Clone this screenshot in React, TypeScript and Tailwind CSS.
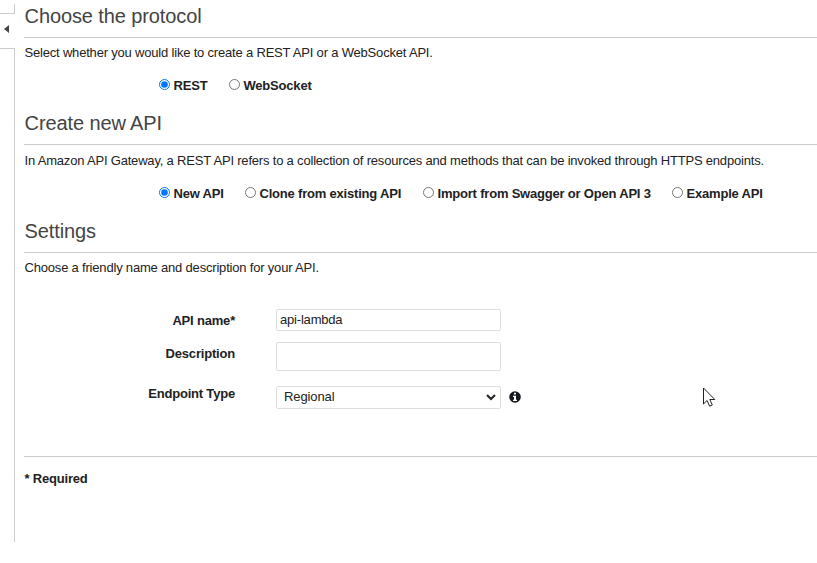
import React from "react";

function Heading({ children }: { children: React.ReactNode }) {
  return (
    <h2 className="h-[38px] border-b border-[#ccc] pl-[0.6px] pt-[4px] text-[20px] leading-[24px] tracking-[-0.11px] text-[#444] whitespace-nowrap">
      {children}
    </h2>
  );
}

function Radio({ name, label, checked, className }: { name: string; label: string; checked?: boolean; className: string }) {
  return (
    <label className={"flex shrink-0 items-start whitespace-nowrap font-bold tracking-[-0.2px] " + className}>
      <input type="radio" name={name} defaultChecked={checked} className="mr-[3.5px] mt-[2px] h-[11px] w-[11px] shrink-0" />
      <span className="leading-[18px]">{label}</span>
    </label>
  );
}

export default function App() {
  return (
    <div className="flex h-[563px] w-[817px] overflow-hidden bg-white font-['Liberation_Sans',Arial,sans-serif] text-[13px] tracking-[-0.19px] text-[#222]">
      <div className="flex w-[15px] shrink-0 flex-col pt-[4px]">
        <div className="h-[10px] border-b border-r border-[#ccc]" />
        <div className="flex h-[34px] items-center pb-[4px] pl-[4px]">
          <svg width="5" height="8" viewBox="0 0 5 8">
            <path d="M5 0v8L0 4z" fill="#444" />
          </svg>
        </div>
        <div className="h-[494px] border-r border-t border-[#ccc]" />
      </div>
      <main className="ml-[9px] flex-1">
        <section className="h-[107px]">
          <Heading>Choose the protocol</Heading>
          <p className="mt-[6px] pl-[0.5px] leading-[18px] whitespace-nowrap">
            Select whether you would like to create a REST API or a WebSocket API.
          </p>
          <div className="mt-[15px] flex pl-[135px]">
            <Radio name="protocol" label="REST" checked className="w-[70px]" />
            <Radio name="protocol" label="WebSocket" className="" />
          </div>
        </section>
        <section className="h-[108px]">
          <Heading>Create new API</Heading>
          <p className="mt-[7px] pl-[0.5px] leading-[18px] whitespace-nowrap">
            In Amazon API Gateway, a REST API refers to a collection of resources and methods that can be invoked through HTTPS endpoints.
          </p>
          <div className="mt-[15px] flex pl-[135px]">
            <Radio name="kind" label="New API" checked className="w-[86px]" />
            <Radio name="kind" label="Clone from existing API" className="w-[178px]" />
            <Radio name="kind" label="Import from Swagger or Open API 3" className="w-[249px]" />
            <Radio name="kind" label="Example API" className="" />
          </div>
        </section>
        <section>
          <Heading>Settings</Heading>
          <p className="mt-[6px] pl-[0.5px] leading-[18px] whitespace-nowrap">Choose a friendly name and description for your API.</p>
          <form className="mt-[32px] h-[147px]">
            <div className="flex h-[33px]">
              <label className="mr-[41px] w-[211px] pt-[3px] text-right font-bold leading-[18px]">API name*</label>
              <input defaultValue="api-lambda" className="h-[22px] w-[225px] rounded-[2px] border border-[#ddd] px-[3px] pb-[2px] tracking-[-0.19px]" />
            </div>
            <div className="flex h-[44px]">
              <label className="mr-[41px] w-[211px] pt-[3px] text-right font-bold leading-[18px]">Description</label>
              <input className="h-[29px] w-[225px] rounded-[2px] border border-[#ddd] px-[3px]" />
            </div>
            <div className="flex">
              <label className="mr-[41px] w-[211px] text-right font-bold leading-[16px]">Endpoint Type</label>
              <div className="flex h-[23px] w-[225px] rounded-[2px] border border-[#ddd] pr-px">
                <select className="h-[21px] w-full bg-white px-[3px] pb-[2px] tracking-[-0.1px] outline-none">
                  <option>Regional</option>
                </select>
              </div>
              <svg className="ml-[8px] mt-[4.500px]" width="12" height="12" viewBox="0 0 12 12">
                <circle cx="6" cy="6" r="5.8" fill="#16191f" />
                <path d="M5 1.8h2v1.7H5zM4 4.7h3v4h1V10H4V8.700h1V6H4z" fill="#fff" />
              </svg>
            </div>
          </form>
        </section>
        <footer className="border-t border-[#ccc] pl-[0.5px] pt-[13px] font-bold leading-[18px]">* Required</footer>
      </main>
      <svg className="absolute left-[703px] top-[387px]" width="14" height="21" viewBox="0 0 14 21">
        <path d="M.5 1v16l3.600-3.500 2.500 5.700 2.700-1.200-2.500-5.500h5z" fill="#fff" stroke="#222" strokeWidth="1" />
      </svg>
    </div>
  );
}
